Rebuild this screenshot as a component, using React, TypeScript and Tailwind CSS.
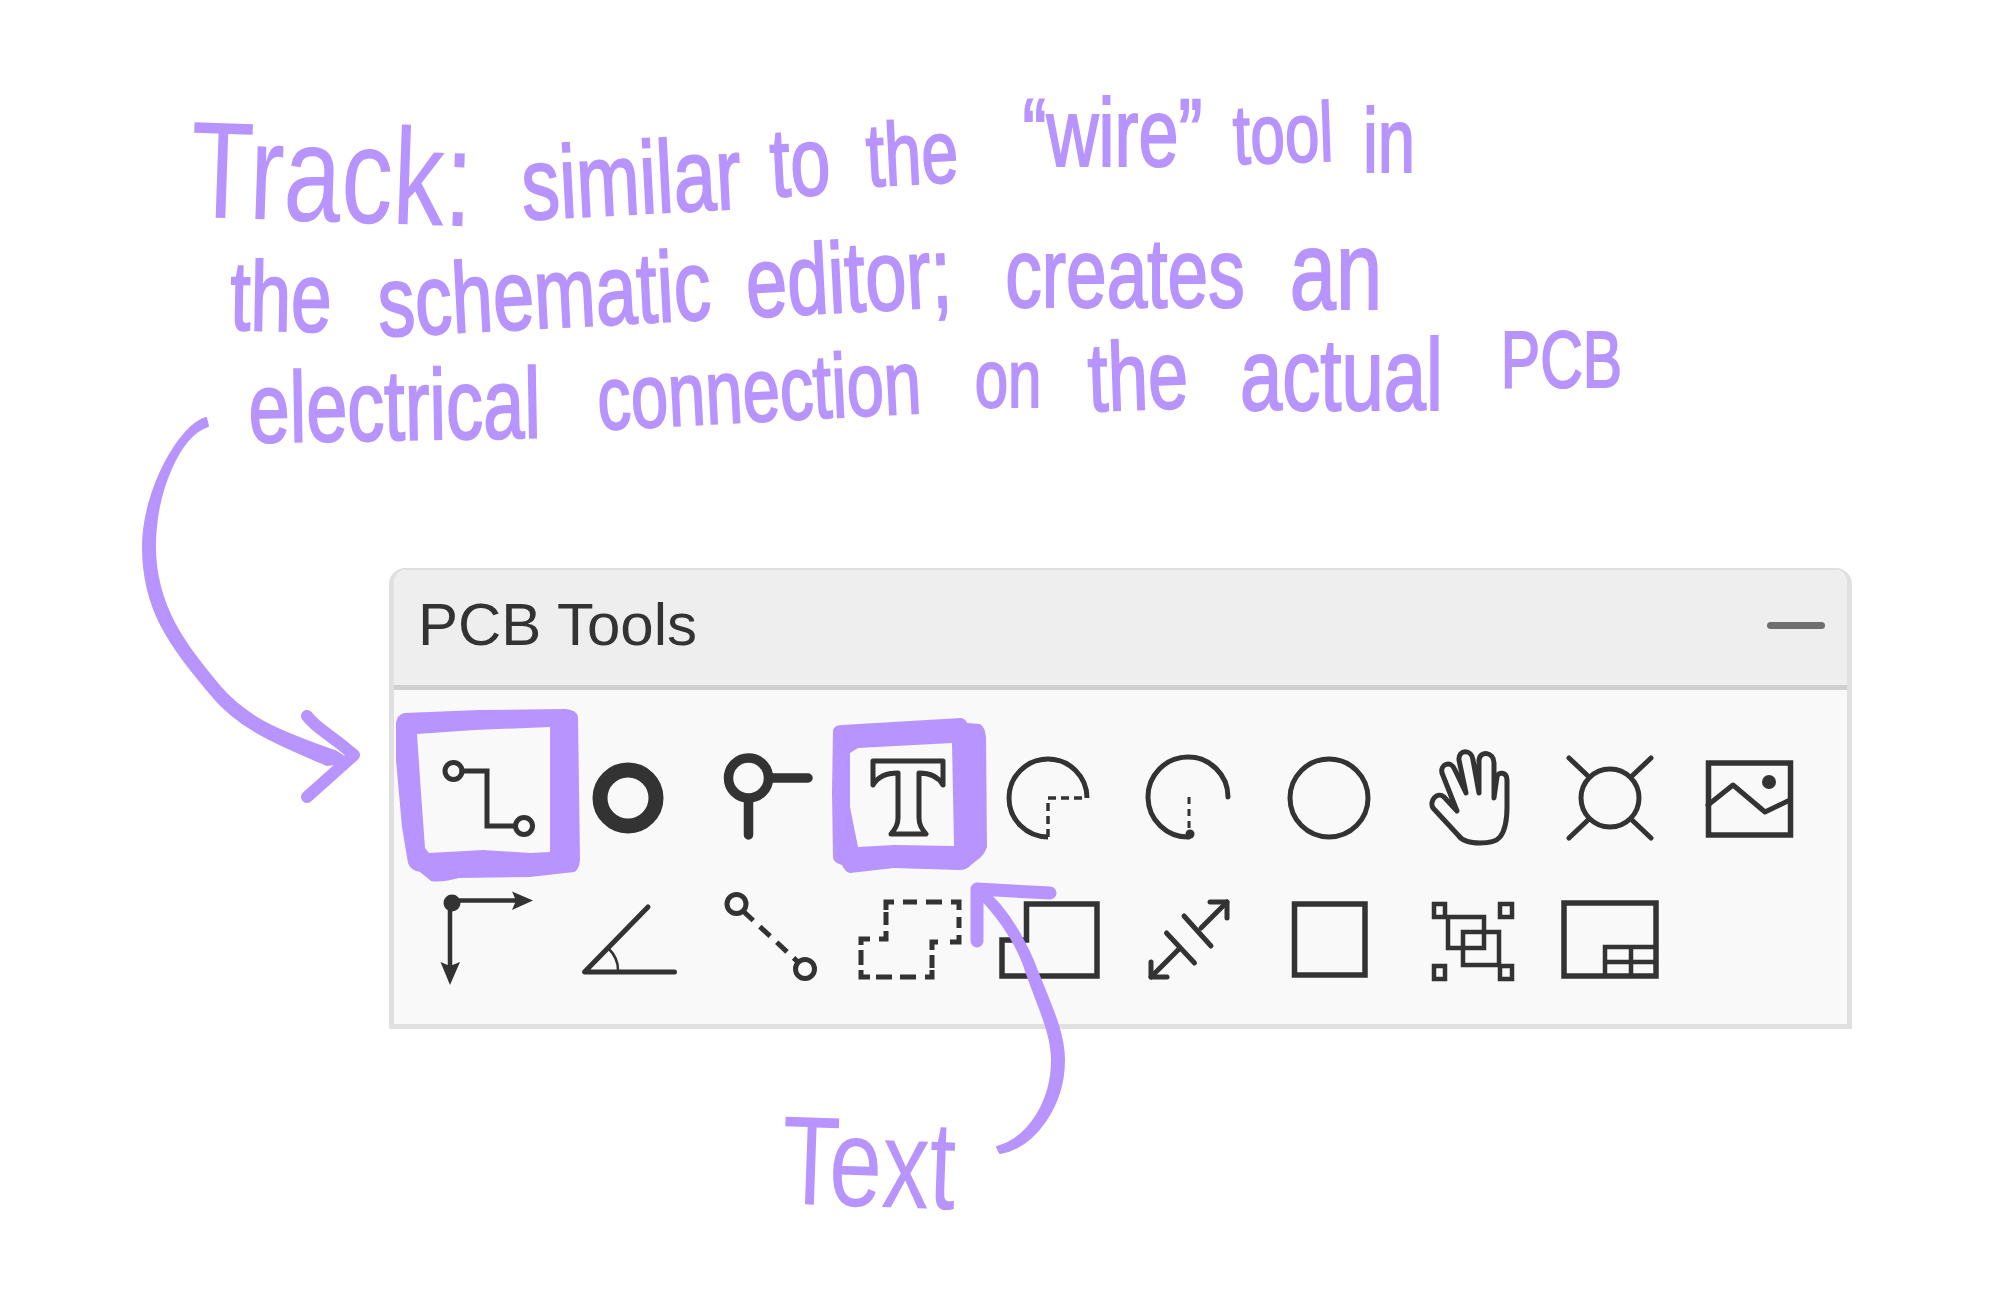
import React from 'react';

const INK = '#333333';
const PURPLE = '#b794ff';

const Icon = ({ children }: { children: React.ReactNode }) => (
  <svg
    viewBox="-50 -50 100 100"
    className="w-[100px] h-[100px] overflow-visible"
    fill="none"
    stroke={INK}
    strokeWidth={5}
    strokeLinecap="round"
    strokeLinejoin="round"
  >
    {children}
  </svg>
);

const tools: React.ReactNode[] = [
  // track
  <>
    <circle cx={-34.5} cy={-27} r={8.5} />
    <circle cx={36} cy={28} r={8.5} />
    <path d="M-26 -27 H-1 V28 H27.5" strokeLinejoin="miter" />
  </>,
  // via
  <circle r={28} strokeWidth={15} />,
  // pad
  <>
    <circle cx={-19.5} cy={-20} r={20} strokeWidth={9.5} />
    <path d="M-19.5 4 V37 M4 -20 H40" strokeWidth={9.5} />
  </>,
  // text
  <path d="M-35 -37 H35 V-13 C31 -20 24 -25 11 -25 V20 C11 27 14 31 18 36 H-17 C-13 31 -10 27 -10 20 V-25 C-23 -25 -31 -20 -35 -13 Z" />,
  // arc, corner at the centre
  <>
    <path d="M39 0 A39 39 0 1 0 0 39" strokeLinecap="butt" />
    <path d="M0 39 V0 H39" strokeWidth={3.5} strokeDasharray="8 5" strokeLinecap="butt" />
  </>,
  // arc, radius down
  <>
    <path d="M40 -1 A40 40 0 1 0 1 39" />
    <path d="M1 -1 V36" strokeWidth={3} strokeDasharray="7 5" strokeLinecap="butt" />
    <circle cx={2} cy={36} r={4.5} fill={INK} stroke="none" />
  </>,
  // circle
  <circle cx={1} r={39} />,
  // pan
  <path
    d="M12 45 C1 45 -6 43 -10 37 L-35 10 C-39 3 -31 -7 -24 -1 L-11 13 L-26 -25 C-28 -34 -17 -38 -13 -28 L-2 -5 L-9 -38 C-10 -49 4 -49 5 -38 L11 -5 L11 -38 C12 -48 26 -46 26 -35 L26 0 L29 -21 C30 -27 39 -26 39 -18 L39 9 C39 26 36 34 32 39 C28 44 20 45 12 45 Z"
  />,
  // point of interest
  <>
    <circle cx={2} cy={0} r={29} />
    <path d="M-39 -40 L-20 -22 M43 -40 L24 -22 M-39 40 L-20 22 M43 40 L24 22" />
  </>,
  // image
  <>
    <rect x={-39.5} y={-35} width={82} height={72} strokeWidth={5.5} strokeLinejoin="miter" />
    <path d="M-40 7 L-15 -13 L17 14 L42 2" />
    <circle cx={21} cy={-16} r={7} fill={INK} stroke="none" />
  </>,
  // line modes
  <>
    <path d="M-36 -39.5 H28 M-38 -37 V28" strokeWidth={4.5} />
    <circle cx={-36} cy={-37} r={8.5} fill={INK} stroke="none" />
    <path d="M24 -48.5 L45 -39.5 L24 -30 L28 -39.5 Z" fill={INK} stroke="none" />
    <path d="M-47.5 22 L-38 45 L-28 22 L-38 26 Z" fill={INK} stroke="none" />
  </>,
  // angle
  <>
    <path d="M20 -33 L-43.5 32 H46.5" strokeWidth={5} />
    <path d="M-19 9 C-13 15 -10 22 -10 30" strokeWidth={2.5} />
  </>,
  // dimension line
  <>
    <circle cx={-31.5} cy={-36} r={9.5} strokeWidth={5} />
    <circle cx={37} cy={29} r={9.5} strokeWidth={5} />
    <path d="M-25 -29 L30 22" strokeWidth={5} strokeDasharray="14 9" strokeLinecap="butt" />
  </>,
  // dashed region, corners and dashes drawn one by one so every corner is closed
  <path
    strokeWidth={5}
    strokeLinecap="butt"
    strokeLinejoin="miter"
    d="M-22 -30 V-38 H-14 M-5 -38 H9 M18 -38 H34 M43 -38 H51 V-30 M51 -23 V-12 M51 -5 V2 H42 M30 2 H24 V10 M24 15 V28 M24 30 V37 H17 M8 37 H-8 M-16 37 H-32 M-38 37 H-47 V30 M-47 25 V10 M-47 5 V-1 H-38 M-29 -1 H-22 V-9 M-22 -15 V-28"
  />,
  // board outline
  <path d="M-21.5 -36 H49 V36 H-46 V0 H-21.5 Z" strokeWidth={5.5} strokeLinejoin="miter" />,
  // measure
  <>
    <path d="M39 -38 L13 -12 M-37 37 L-8 8" />
    <path d="M22 -38 H39 V-22 M-37 22 V37 H-21" />
    <path d="M-4 -24 L23 6 M-21.5 -7 L6.5 23" />
  </>,
  // rectangle
  <rect x={-33.5} y={-36} width={70.5} height={71} strokeWidth={5.5} strokeLinejoin="miter" />,
  // group
  <g strokeWidth={4.5} strokeLinejoin="miter">
    <rect x={-34} y={-36} width={11} height={13} />
    <rect x={32} y={-36} width={12} height={13} />
    <rect x={-34} y={26} width={11} height={13} />
    <rect x={32} y={26} width={12} height={13} />
    <rect x={-20} y={-23} width={36} height={31} />
    <rect x={-5} y={-8} width={36} height={33} />
  </g>,
  // table
  <g strokeWidth={5.5} strokeLinejoin="miter">
    <rect x={-44} y={-37} width={92} height={73} />
    <path d="M-3 36 V7 H48 M-3 22 H48 M23 7 V36" strokeWidth={4.5} />
  </g>,
];

const Word = ({ className, big, children }: { className: string; big?: boolean; children: React.ReactNode }) => (
  <span
    className={`flex shrink-0 items-center justify-center whitespace-nowrap leading-[0.8] text-[#b794ff] ${
      big ? 'scale-x-[1.2] scale-y-[1.6]' : 'scale-y-[1.35] [-webkit-text-stroke:1.5px_#b794ff]'
    } ${className}`}
  >
    {children}
  </span>
);

const Scribbles = () => (
  <svg
    viewBox="0 0 2003 1305"
    className="absolute inset-0 w-[2003px] h-[1305px] pointer-events-none"
    fill="none"
    stroke={PURPLE}
    strokeLinecap="round"
    strokeLinejoin="round"
  >
    {/* box round the track tool */}
    <path
      fill={PURPLE}
      stroke="none"
      fillRule="evenodd"
      d="M396 723 Q397 715 404 713 L479 710 L566 709 Q577 710 578 717 L580 860 Q579 870 574 872 L530 877 L459 878 Q440 883 431 881 L420 872 Q410 870 408 863 L402 827 L396 760 Z M417 734 L475 730 L550 727 L550 852 L530 853 L483 850 L429 853 L425 848 L421 793 Z"
    />
    {/* box round the text tool */}
    <path
      fill={PURPLE}
      stroke="none"
      fillRule="evenodd"
      d="M833 730 Q835 725 842 725 L961 718 Q966 719 967 723 L980 724 Q985 727 986 737 L987 847 Q985 853 981 857 L971 865 Q967 870 959 870 L894 868 L850 873 Q845 872 842 865 Q834 863 833 858 L832 793 Z M850 753 L858 748 L952 743 L954 846 L894 845 L858 847 L850 807 Z"
    />
    {/* left arrow, tapered */}
    <path
      fill={PURPLE}
      strokeWidth={2}
      d="M206 418 C180 425 143 490 143 547 C143 610 170 645 210 693 C240 730 280 745 327 765 L352 762 L337 752 C290 735 250 722 220 687 C190 650 155 610 155 547 C155 490 180 435 208 426 Z"
    />
    <path d="M307 716 C318 730 325 730 354 755 L307 797" strokeWidth={12} />
    {/* text arrow, tapered */}
    <path
      fill={PURPLE}
      strokeWidth={2}
      d="M997 1147 C1030 1138 1052 1100 1052 1060 C1052 1030 1035 1000 1024 965 C1015 940 995 912 977 895 L980 886 C1005 905 1022 935 1034 963 C1048 1000 1064 1030 1064 1060 C1064 1105 1035 1147 1000 1153 Z"
    />
    <path d="M977 941 V889 L1050 893" strokeWidth={13} />
  </svg>
);

const App = () => (
  <div className="relative w-[2003px] h-[1305px] overflow-hidden bg-white pt-[89px] font-['Liberation_Sans',sans-serif]">
    {/* handwritten note, three wobbling lines */}
    <div className="flex h-[147px] pl-[189px]">
      <Word big className="mt-[30px] w-[286px] h-[111px] text-[86px] rotate-2">Track:</Word>
      <Word className="ml-[46px] mt-[58px] w-[220px] h-[64px] text-[76px] -rotate-3">similar</Word>
      <Word className="ml-[29px] mt-[45px] w-[60px] h-[58px] text-[72px] -rotate-3">to</Word>
      <Word className="ml-[36px] mt-8 w-[92px] h-[64px] text-[66px] -rotate-3">the</Word>
      <Word className="ml-16 w-[181px] h-[90px] text-[72px]">“wire”</Word>
      <Word className="ml-[30px] mt-[7px] w-[100px] h-[76px] text-[62px] -rotate-2">tool</Word>
      <Word className="ml-[30px] mt-5 w-[52px] h-[63px] text-[67px]">in</Word>
    </div>
    <div className="flex h-[90px] pl-[230px]">
      <Word className="mt-[19px] w-[102px] h-[84px] text-[73px] rotate-1">the</Word>
      <Word className="ml-[45px] mt-4 w-[334px] h-[83px] text-[74px] -rotate-3">schematic</Word>
      <Word className="ml-[34px] w-[207px] h-[83px] text-[74px] -rotate-3">editor;</Word>
      <Word className="ml-[53px] mt-[3px] w-[240px] h-[68px] text-[73px]">creates</Word>
      <Word className="ml-[45px] w-[92px] h-[71px] text-[83px]">an</Word>
    </div>
    <div className="flex h-[242px] pl-[249px]">
      <Word className="mt-11 w-[291px] h-[71px] text-[74px] -rotate-1">electrical</Word>
      <Word className="ml-[58px] mt-[25px] w-[322px] h-[77px] text-[67px] -rotate-3">connection</Word>
      <Word className="ml-[55px] mt-[25px] w-[66px] h-[58px] text-[60px]">on</Word>
      <Word className="ml-[47px] mt-[13px] w-[100px] h-[76px] text-[72px] -rotate-2">the</Word>
      <Word className="ml-[51px] mt-[9px] w-[205px] h-[80px] text-[76px]">actual</Word>
      <Word className="ml-[57px] w-[121px] h-[70px] text-[59px]">PCB</Word>
    </div>

    <section className="ml-[389px] w-[1463px] h-[461px] flex flex-col rounded-t-[16px] border-x-[5px] border-b-[5px] border-t-2 border-[#e0e0e0] bg-[#f9f9f9]">
      <header className="h-[120px] shrink-0 flex items-center justify-between pl-6 pr-[22px] pb-[5px] bg-[#eeeeee] rounded-t-[14px] border-b-[5px] border-[#d0d0d0]">
        <h2 className="text-[60px] leading-none text-[#333333]">PCB Tools</h2>
        <div className="w-[58px] h-[7px] rounded-full bg-[#6f6f6f]" />
      </header>
      <div className="grid grid-cols-[repeat(10,140px)] auto-rows-[142px] pl-6 pt-[37px]">
        {tools.map((tool, i) => (
          <div key={i} className="flex items-center justify-center">
            <Icon>{tool}</Icon>
          </div>
        ))}
      </div>
    </section>

    <div className="flex pl-[777px] pt-[89px]">
      <Word big className="w-[184px] h-[89px] text-[79px] rotate-2">Text</Word>
    </div>

    <Scribbles />
  </div>
);

export default App;
